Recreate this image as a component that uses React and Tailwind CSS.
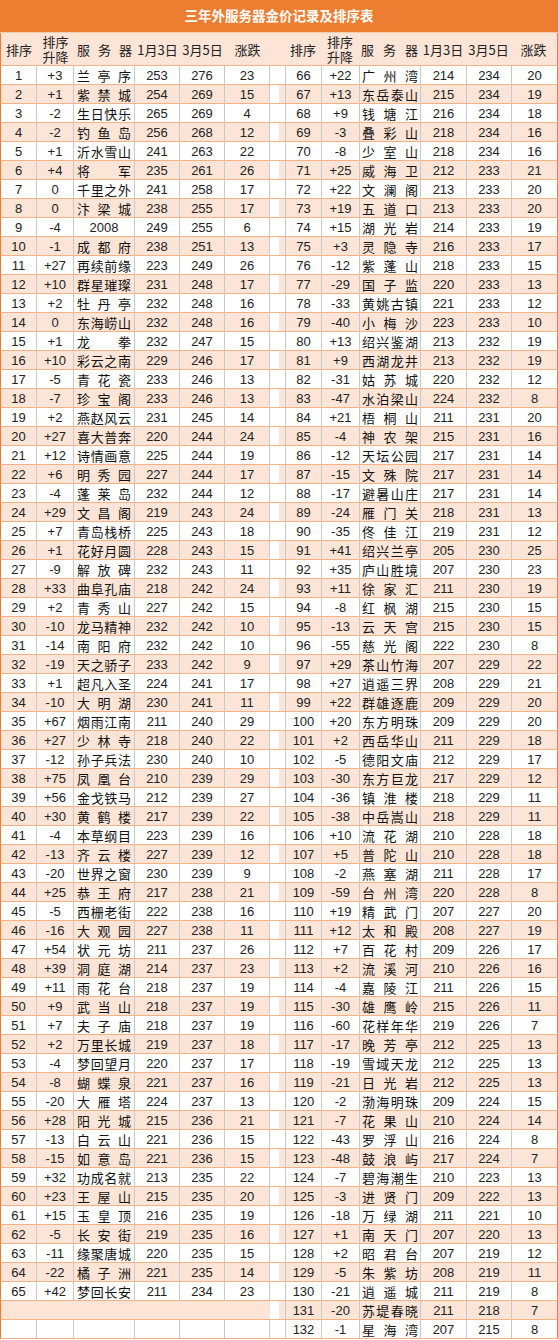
import React from "react";

const LEFT = [
  [1,"+3","兰亭序",253,276,23],[2,"+1","紫禁城",254,269,15],[3,"-2","生日快乐",265,269,4],[4,"-2","钓鱼岛",256,268,12],
  [5,"+1","沂水雪山",241,263,22],[6,"+4","将军",235,261,26],[7,"0","千里之外",241,258,17],[8,"0","汴梁城",238,255,17],
  [9,"-4","2008",249,255,6],[10,"-1","成都府",238,251,13],[11,"+27","再续前缘",223,249,26],[12,"+10","群星璀璨",231,248,17],
  [13,"+2","牡丹亭",232,248,16],[14,"0","东海崂山",232,248,16],[15,"+1","龙拳",232,247,15],[16,"+10","彩云之南",229,246,17],
  [17,"-5","青花瓷",233,246,13],[18,"-7","珍宝阁",233,246,13],[19,"+2","燕赵风云",231,245,14],[20,"+27","喜大普奔",220,244,24],
  [21,"+12","诗情画意",225,244,19],[22,"+6","明秀园",227,244,17],[23,"-4","蓬莱岛",232,244,12],[24,"+29","文昌阁",219,243,24],
  [25,"+7","青岛栈桥",225,243,18],[26,"+1","花好月圆",228,243,15],[27,"-9","解放碑",232,243,11],[28,"+33","曲阜孔庙",218,242,24],
  [29,"+2","青秀山",227,242,15],[30,"-10","龙马精神",232,242,10],[31,"-14","南阳府",232,242,10],[32,"-19","天之骄子",233,242,9],
  [33,"+1","超凡入圣",224,241,17],[34,"-10","大明湖",230,241,11],[35,"+67","烟雨江南",211,240,29],[36,"+27","少林寺",218,240,22],
  [37,"-12","孙子兵法",230,240,10],[38,"+75","凤凰台",210,239,29],[39,"+56","金戈铁马",212,239,27],[40,"+30","黄鹤楼",217,239,22],
  [41,"-4","本草纲目",223,239,16],[42,"-13","齐云楼",227,239,12],[43,"-20","世界之窗",230,239,9],[44,"+25","恭王府",217,238,21],
  [45,"-5","西栅老街",222,238,16],[46,"-16","大观园",227,238,11],[47,"+54","状元坊",211,237,26],[48,"+39","洞庭湖",214,237,23],
  [49,"+11","雨花台",218,237,19],[50,"+9","武当山",218,237,19],[51,"+7","夫子庙",218,237,19],[52,"+2","万里长城",219,237,18],
  [53,"-4","梦回望月",220,237,17],[54,"-8","蝴蝶泉",221,237,16],[55,"-20","大雁塔",224,237,13],[56,"+28","阳光城",215,236,21],
  [57,"-13","白云山",221,236,15],[58,"-15","如意岛",221,236,15],[59,"+32","功成名就",213,235,22],[60,"+23","王屋山",215,235,20],
  [61,"+15","玉皇顶",216,235,19],[62,"-5","长安街",219,235,16],[63,"-11","缘聚唐城",220,235,15],[64,"-22","橘子洲",221,235,14],
  [65,"+42","梦回长安",211,234,23],
];

const RIGHT = [
  [66,"+22","广州湾",214,234,20],[67,"+13","东岳泰山",215,234,19],[68,"+9","钱塘江",216,234,18],[69,"-3","叠彩山",218,234,16],
  [70,"-8","少室山",218,234,16],[71,"+25","威海卫",212,233,21],[72,"+22","文澜阁",213,233,20],[73,"+19","五道口",213,233,20],
  [74,"+15","湖光岩",214,233,19],[75,"+3","灵隐寺",216,233,17],[76,"-12","紫蓬山",218,233,15],[77,"-29","国子监",220,233,13],
  [78,"-33","黄姚古镇",221,233,12],[79,"-40","小梅沙",223,233,10],[80,"+13","绍兴鉴湖",213,232,19],[81,"+9","西湖龙井",213,232,19],
  [82,"-31","姑苏城",220,232,12],[83,"-47","水泊梁山",224,232,8],[84,"+21","梧桐山",211,231,20],[85,"-4","神农架",215,231,16],
  [86,"-12","天坛公园",217,231,14],[87,"-15","文殊院",217,231,14],[88,"-17","避暑山庄",217,231,14],[89,"-24","雁门关",218,231,13],
  [90,"-35","佟佳江",219,231,12],[91,"+41","绍兴兰亭",205,230,25],[92,"+35","庐山胜境",207,230,23],[93,"+11","徐家汇",211,230,19],
  [94,"-8","红枫湖",215,230,15],[95,"-13","云天宫",215,230,15],[96,"-55","慈光阁",222,230,8],[97,"+29","茶山竹海",207,229,22],
  [98,"+27","逍遥三界",208,229,21],[99,"+22","群雄逐鹿",209,229,20],[100,"+20","东方明珠",209,229,20],[101,"+2","西岳华山",211,229,18],
  [102,"-5","德阳文庙",212,229,17],[103,"-30","东方巨龙",217,229,12],[104,"-36","镇淮楼",218,229,11],[105,"-38","中岳嵩山",218,229,11],
  [106,"+10","流花湖",210,228,18],[107,"+5","普陀山",210,228,18],[108,"-2","燕塞湖",211,228,17],[109,"-59","台州湾",220,228,8],
  [110,"+19","精武门",207,227,20],[111,"+12","太和殿",208,227,19],[112,"+7","百花村",209,226,17],[113,"+2","流溪河",210,226,16],
  [114,"-4","嘉陵江",211,226,15],[115,"-30","雄鹰岭",215,226,11],[116,"-60","花样年华",219,226,7],[117,"-17","晚芳亭",212,225,13],
  [118,"-19","雪域天龙",212,225,13],[119,"-21","日光岩",212,225,13],[120,"-2","渤海明珠",209,224,15],[121,"-7","花果山",210,224,14],
  [122,"-43","罗浮山",216,224,8],[123,"-48","鼓浪屿",217,224,7],[124,"-7","碧海潮生",210,223,13],[125,"-3","进贤门",209,222,13],
  [126,"-18","万绿湖",211,221,10],[127,"+1","南天门",207,220,13],[128,"+2","昭君台",207,219,12],[129,"-5","朱紫坊",208,219,11],
  [130,"-21","逍遥城",211,219,8],[131,"-20","苏堤春晓",211,218,7],[132,"-1","星海湾",207,215,8],
];

const LW = ["w-[37px]", "w-[37px]", "w-[61px]", "w-[45px]", "w-[45px]", "w-[45px]"];
const RW = ["w-[36px]", "w-[38px]", "w-[61px]", "w-[46px]", "w-[45px]", "w-[46px]"];

function Name({ name, pad }) {
  if (/^\d+$/.test(name)) {
    return <span className="w-full text-center">{name}</span>;
  }
  return (
    <span className={`flex w-full justify-between ${pad} text-[13px] font-['Noto_Sans_CJK_SC',sans-serif] text-[#111]`}>
      {name.split("").map((c, i) => (
        <span key={i}>{c}</span>
      ))}
    </span>
  );
}

function Cells({ data, widths, stripe, side, empty, noLines }) {
  const bg = stripe ? "bg-[#fce4d6]" : "bg-white";
  return widths.map((w, i) => {
    const isLastRight = side === "right" && i === widths.length - 1;
    const vr = noLines
      ? "border-r-0"
      : isLastRight
      ? "border-r border-r-[#ed7d31]"
      : "border-r border-r-[#c9c9c9]";
    const first = side === "left" && i === 0 ? "border-l border-l-[#ed7d31]" : "";
    let content = null;
    if (!empty && data) {
      content = i === 2 ? <Name name={data[2]} pad={side === "left" ? "px-[3px]" : "px-[2px]"} /> : data[i];
    }
    return (
      <div
        key={i}
        className={`${w} ${bg} ${vr} ${first} h-[19px] shrink-0 flex items-center justify-center border-b border-b-[#f4b183]`}
      >
        {content}
      </div>
    );
  });
}

export default function App() {
  const rows = [];
  for (let i = 0; i < 67; i++) {
    const stripe = i % 2 === 1;
    const l = LEFT[i];
    const r = RIGHT[i];
    rows.push(
      <div key={i} className="flex">
        <Cells data={l} widths={LW} stripe={stripe} side="left" empty={!l} noLines={!l && stripe} />
        <div className="w-[9px] h-[19px] shrink-0 bg-white border-b border-b-[#f4b183]" />
        <div
          className={`w-[7px] h-[19px] shrink-0 ${stripe ? "bg-[#fce4d6]" : "bg-white"} border-r border-r-[#c9c9c9] border-b border-b-[#f4b183]`}
        />
        <Cells data={r} widths={RW} stripe={stripe} side="right" />
      </div>
    );
  }

  return (
    <div className="w-[558px] h-[1340px] overflow-hidden bg-white font-['Liberation_Sans','Noto_Sans_CJK_SC',sans-serif] text-[13px] leading-none text-[#222]">
      <div className="h-[33px] bg-[#ed7d31] flex items-center justify-center text-white font-bold text-[13.5px] font-['Noto_Sans_CJK_SC',sans-serif] border-b border-b-[#f8cbad]">
        三年外服务器金价记录及排序表
      </div>
      <div className="flex h-[33px] bg-[#fce4d6] border-b border-b-[#f4b183] border-x border-x-[#ed7d31] text-[13px] text-[#222] font-['Noto_Sans_CJK_SC',sans-serif]">
        {[0, 1].map((s) => {
          const W = s === 0 ? LW : RW;
          return (
            <React.Fragment key={s}>
              {s === 1 && <div className="w-[15px] shrink-0" />}
              <div className={`${s === 0 ? "w-[36px]" : W[0]} shrink-0 flex items-center justify-center`}>排序</div>
              <div className={`${W[1]} shrink-0 flex flex-col items-center justify-center leading-[15px]`}>
                <span>排序</span>
                <span>升降</span>
              </div>
              <div className={`${W[2]} shrink-0 flex items-center`}>
                <span className={`flex w-full justify-between ${s === 0 ? "px-[3px]" : "px-[2px]"}`}>
                  <span>服</span>
                  <span>务</span>
                  <span>器</span>
                </span>
              </div>
              <div className={`${W[3]} shrink-0 flex items-center justify-center`}>1月3日</div>
              <div className={`${W[4]} shrink-0 flex items-center justify-center`}>3月5日</div>
              <div className={`${s === 1 ? "w-[45px]" : W[5]} shrink-0 flex items-center justify-center`}>涨跌</div>
            </React.Fragment>
          );
        })}
      </div>
      {rows}
    </div>
  );
}
